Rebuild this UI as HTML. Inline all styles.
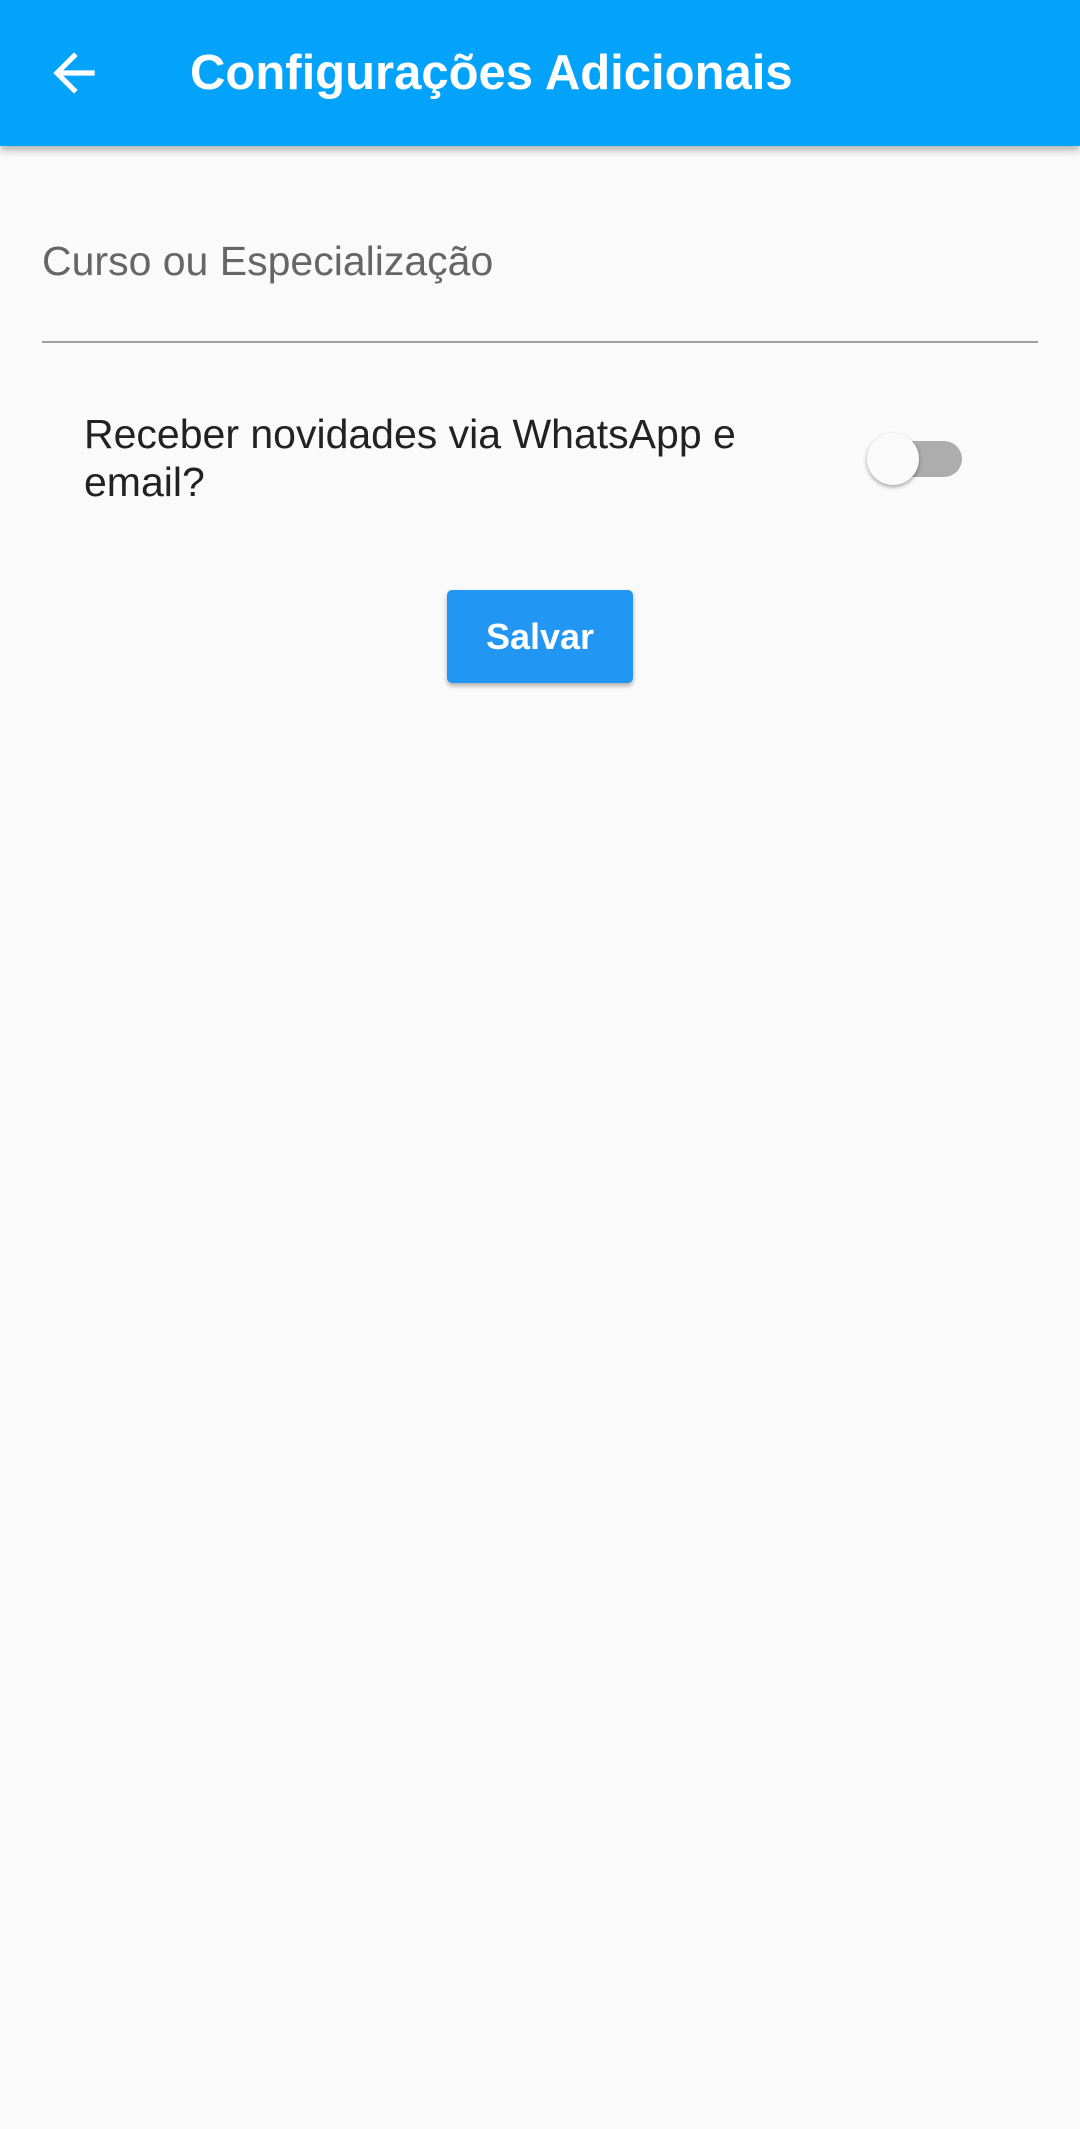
<!DOCTYPE html>
<html><head><meta charset="utf-8"><style>
*{margin:0;padding:0;box-sizing:border-box}
body{width:1080px;height:2129px;background:#fafafa;font-family:"Liberation Sans",sans-serif;position:relative;overflow:hidden}
.bar{position:absolute;left:0;top:0;width:1080px;height:146px;background:#03a3fb;box-shadow:0 4px 8px rgba(0,0,0,.3)}
.title{position:absolute;left:190px;top:43px;font-size:49px;color:#fff;font-weight:bold;line-height:60px}
.back{position:absolute;left:43px;top:42px}
.label{position:absolute;left:42px;top:238px;font-size:41px;color:#666}
.line{position:absolute;left:42px;top:341px;width:996px;height:2px;background:#9e9e9e}
.txt{position:absolute;left:84px;top:410px;font-size:41px;color:#222;line-height:48px;width:700px}
.track{position:absolute;left:875px;top:441px;width:87px;height:36px;border-radius:18px;background:#adadad}
.thumb{position:absolute;left:867px;top:433px;width:52px;height:52px;border-radius:50%;background:#fafafa;box-shadow:0 2px 4px rgba(0,0,0,.35)}
.btn{position:absolute;left:447px;top:590px;width:186px;height:93px;background:#2196f3;border-radius:5px;box-shadow:0 3px 5px rgba(0,0,0,.3);color:#fff;font-size:36px;font-weight:bold;text-align:center;line-height:93px}
</style></head><body>
<div class="bar">
<svg class="back" width="62" height="62" viewBox="0 0 24 24"><path d="M20 11H7.83l5.59-5.59L12 4l-8 8 8 8 1.41-1.41L7.83 13H20v-2z" fill="#fff"/></svg>
<div class="title">Configurações Adicionais</div>
</div>
<div class="label">Curso ou Especialização</div>
<div class="line"></div>
<div class="txt">Receber novidades via WhatsApp e email?</div>
<div class="track"></div><div class="thumb"></div>
<div class="btn">Salvar</div>
</body></html>
